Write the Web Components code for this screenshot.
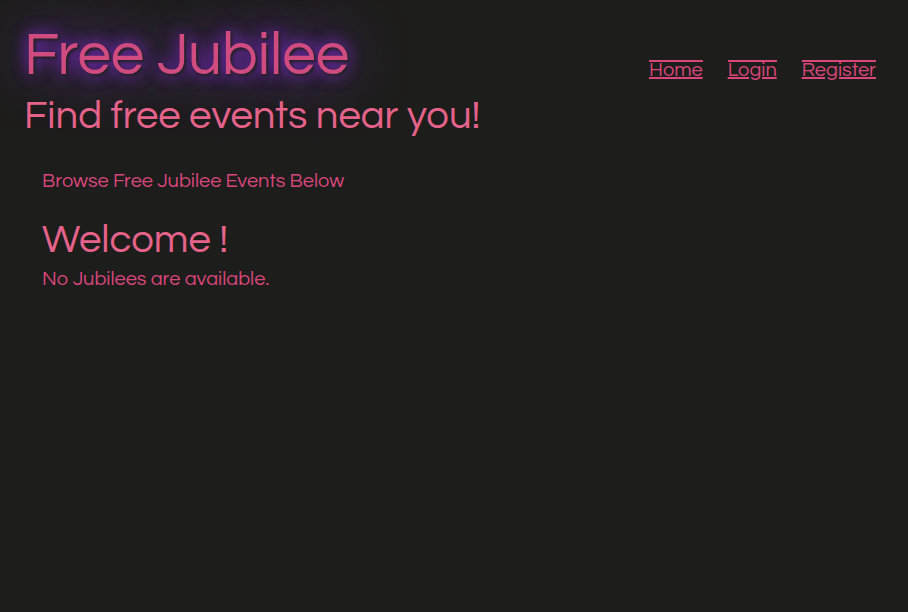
<!DOCTYPE html>
<html lang="en">
<head>
<meta charset="utf-8">
<meta name="viewport" content="width=device-width, initial-scale=1">
<title>Free Jubilee</title>
<style>
body { margin: 0; min-height: 100vh; background: #1d1d1b; color: #d9467c; font: 20px/30px Questrial, Lato, "Open Sans", sans-serif; }
</style>
</head>
<body>
<jubilee-page></jubilee-page>
<script>
class JubileeNav extends HTMLElement {
  constructor() {
    super();
    this.attachShadow({ mode: "open" }).innerHTML = `
      <style>
        :host { display: block; }
        nav { display: flex; gap: 25px; }
        ::slotted(a) { color: inherit; line-height: 16px; border-top: 2px solid; text-decoration: underline; }
      </style>
      <nav aria-label="Main"><slot></slot></nav>`;
  }
}
class JubileeHeader extends HTMLElement {
  constructor() {
    super();
    this.attachShadow({ mode: "open" }).innerHTML = `
      <style>
        :host { display: block; }
        header { display: flex; justify-content: space-between; align-items: flex-start; padding: 18px 32px 0 24px; }
        h1, h2 { margin: 0; font-weight: 400; white-space: nowrap; }
        h1 { color: #cf4b80; font-size: 60px; line-height: 76px; text-shadow: 2px 2px 3px #222222, 0 0 16px #7a2cc0, 0 0 16px #54228a, 0 0 64px #a45cff; }
        h2 { color: #e5638a; font-size: 40px; line-height: 44px; }
        ::slotted(jubilee-nav) { padding-top: 42px; }
      </style>
      <header>
        <div><h1>Free Jubilee</h1><h2>Find free events near you!</h2></div>
        <slot name="nav"></slot>
      </header>`;
  }
}
class JubileeEvents extends HTMLElement {
  constructor() {
    super();
    this.attachShadow({ mode: "open" }).innerHTML = `
      <style>
        :host { display: block; padding: 28px 42px; }
        p, h2 { margin: 0; font-weight: 400; }
        h2 { color: #e5638a; font-size: 40px; line-height: 48px; margin-top: 20px; }
      </style>
      <p>Browse Free Jubilee Events Below</p><h2>Welcome !</h2><p><slot></slot></p>`;
  }
}
class JubileePage extends HTMLElement {
  constructor() {
    super();
    this.attachShadow({ mode: "open" }).innerHTML = `
      <style>:host { display: block; }</style>
      <jubilee-header><jubilee-nav slot="nav"><a href="#home">Home</a><a href="#login">Login</a><a href="#register">Register</a></jubilee-nav></jubilee-header>
      <main><jubilee-events>No Jubilees are available.</jubilee-events></main>`;
  }
}
customElements.define("jubilee-nav", JubileeNav);
customElements.define("jubilee-header", JubileeHeader);
customElements.define("jubilee-events", JubileeEvents);
customElements.define("jubilee-page", JubileePage);
</script>
</body>
</html>
